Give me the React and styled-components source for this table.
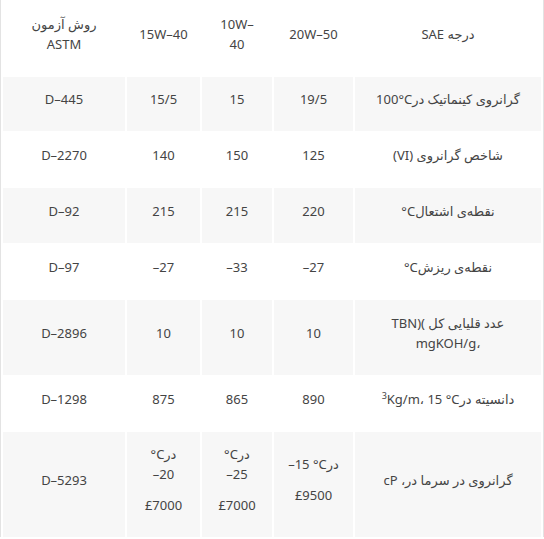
import React from 'react';
import styled, { createGlobalStyle } from 'styled-components';

const GlobalStyle = createGlobalStyle`
  html, body {
    margin: 0;
    padding: 0;
    background: #fff;
  }
  body {
    font-family: "Noto Sans", "DejaVu Sans", sans-serif;
  }
`;

const Frame = styled.div`
  width: 544px;
  box-sizing: border-box;
  border-left: 1px solid #e3e3e3;
  border-right: 1px solid #e3e3e3;
`;

const Table = styled.table`
  width: 100%;
  table-layout: fixed;
  border-collapse: separate;
  border-spacing: 2px 0;
  direction: rtl;
  font-size: 13px;
  line-height: 20px;
  color: #444;
`;

const Column = styled.col`
  width: ${(p) => p.$w}px;
`;

const Row = styled.tr`
  height: ${(p) => p.$h}px;
`;

const Cell = styled.td`
  background: ${(p) => (p.$shaded ? '#f7f7f7' : '#fff')};
  direction: ltr;
  text-align: center;
  vertical-align: middle;
  padding: 8px 12px 18px;
  font-weight: normal;
`;

const Line = styled.div`
  white-space: nowrap;
`;

const Note = styled.div`
  margin-top: 11px;
`;

const Sup = styled.sup`
  font-size: 9px;
  line-height: 0;
`;

const columns = [186, 79, 70, 73, 122];

const rows = [
  {
    h: 54,
    label: '100°Cگرانروی کینماتیک در',
    values: ['19/5', '15', '15/5'],
    astm: 'D–445',
  },
  {
    h: 57,
    label: '(VI) شاخص گرانروی',
    values: ['125', '150', '140'],
    astm: 'D–2270',
  },
  {
    h: 55,
    label: '°Cنقطه‌ی اشتعال',
    values: ['220', '215', '215'],
    astm: 'D–92',
  },
  {
    h: 57,
    label: '°Cنقطه‌ی ریزش',
    values: ['–27', '–33', '–27'],
    astm: 'D–97',
  },
  {
    h: 75,
    label: (
      <>
        <Line>TBN)( عدد قلیایی کل</Line>
        <Line>mgKOH/g،</Line>
      </>
    ),
    values: ['10', '10', '10'],
    astm: 'D–2896',
  },
  {
    h: 57,
    label: (
      <>
        <Sup>3</Sup>Kg/m، 15 °Cدانسیته در
      </>
    ),
    values: ['890', '865', '875'],
    astm: 'D–1298',
  },
  {
    h: 105,
    label: 'cP ،گرانروی در سرما در',
    values: [
      <>
        <Line>–15 °Cدر</Line>
        <Note>£9500</Note>
      </>,
      <>
        <Line>°Cدر</Line>
        <Line>–25</Line>
        <Note>£7000</Note>
      </>,
      <>
        <Line>°Cدر</Line>
        <Line>–20</Line>
        <Note>£7000</Note>
      </>,
    ],
    astm: 'D–5293',
  },
];

export default function App() {
  return (
    <>
      <GlobalStyle />
      <Frame>
        <Table>
          <colgroup>
            {columns.map((w, i) => (
              <Column key={i} $w={w} />
            ))}
          </colgroup>
          <tbody>
            <Row $h={77}>
              <Cell as="th">SAE درجه</Cell>
              <Cell as="th">20W–50</Cell>
              <Cell as="th">10W–40</Cell>
              <Cell as="th">15W–40</Cell>
              <Cell as="th">
                <Line>روش آزمون</Line>
                <Line>ASTM</Line>
              </Cell>
            </Row>
            {rows.map((row, i) => {
              const shaded = i % 2 === 0;
              return (
                <Row key={i} $h={row.h}>
                  <Cell $shaded={shaded}>{row.label}</Cell>
                  {row.values.map((v, j) => (
                    <Cell key={j} $shaded={shaded}>
                      {v}
                    </Cell>
                  ))}
                  <Cell $shaded={shaded}>{row.astm}</Cell>
                </Row>
              );
            })}
          </tbody>
        </Table>
      </Frame>
    </>
  );
}
